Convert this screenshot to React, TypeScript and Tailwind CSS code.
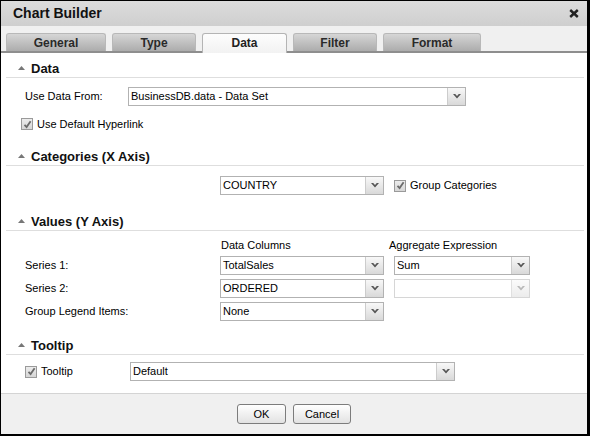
import React from "react";

const TABS = [
  { name: "General", w: "w-[100px]" },
  { name: "Type", w: "w-[84px]" },
  { name: "Data", w: "w-[85px]", active: true },
  { name: "Filter", w: "w-[84px]" },
  { name: "Format", w: "w-[98px]" },
];

function Chevron({ dim }: { dim?: boolean }) {
  return (
    <svg width="8" height="5" viewBox="0 0 8 5">
      <polygon points="0,0 2.2,0 4,2 5.8,0 8,0 4,4.5" fill={dim ? "#b8b8b8" : "#555"} />
    </svg>
  );
}

function Select({ value, w, disabled }: { value?: string; w: string; disabled?: boolean }) {
  return (
    <div className={`${w} flex h-[19px] border bg-white ${disabled ? "border-[#d6d6d6]" : "border-[#b2b2b2]"}`}>
      <div className="flex-1 pl-[2px] flex items-center text-[11px] text-black leading-none">{value}</div>
      <div
        className={`w-[18px] flex items-center justify-center border-l bg-linear-to-b ${
          disabled ? "border-[#e0e0e0] from-[#fbfbfb] to-[#ececec]" : "border-[#cccccc] from-[#f8f8f8] to-[#d9d9d9]"
        }`}
      >
        <Chevron dim={disabled} />
      </div>
    </div>
  );
}

function Check({ label }: { label: string }) {
  return (
    <div className="flex items-center gap-[4px]">
      <div className="w-[12px] h-[12px] border border-[#9a9a9a] bg-linear-to-b from-[#ececec] to-[#d6d6d6] flex items-center justify-center">
        <svg width="9" height="9" viewBox="0 0 9 9">
          <path d="M1.5 4.8 L3.6 7 L7.6 1.2" stroke="#6b6b6b" strokeWidth="1.8" fill="none" />
        </svg>
      </div>
      <span className="text-[11px] text-black leading-none">{label}</span>
    </div>
  );
}

function Header({ title }: { title: string }) {
  return (
    <div className="ml-[5px] mr-[3px] h-[19px] border-b border-[#dedede] flex items-center pl-[12px] gap-[6px]">
      <svg width="7" height="4" viewBox="0 0 7 4">
        <polygon points="0,4 3.5,0 7,4" fill="#777" />
      </svg>
      <span className="text-[13px] font-bold text-[#111] leading-none">{title}</span>
    </div>
  );
}

export default function App() {
  return (
    <div
      className="w-[590px] h-[436px] flex flex-col border-l border-t border-r-[3px] border-b-2 border-black bg-white overflow-hidden"
      style={{ fontFamily: '"Liberation Sans", Arial, sans-serif' }}
    >
      {/* title bar */}
      <div className="h-[25px] flex items-center justify-between pl-[12px] pr-[8px] bg-linear-to-b from-[#dcdcdc] to-[#cfcfcf]">
        <span className="text-[14px] font-bold text-[#111]">Chart Builder</span>
        <svg width="10" height="9" viewBox="0 0 10 9">
          <path d="M1.2 1 L8.8 8 M8.8 1 L1.2 8" stroke="#222" strokeWidth="2.4" />
        </svg>
      </div>

      {/* tabs */}
      <div className="h-[27px] pt-[7px] bg-[#f0f0f0] border-b-2 border-[#8e8e8e] flex items-end gap-[6px] pl-[5px]">
        {TABS.map((t) =>
          t.active ? (
            <div
              key={t.name}
              className={`${t.w} h-[20px] -mb-[2px] rounded-t-[3px] border border-b-0 border-[#b4b4b4] bg-linear-to-b from-[#fdfdfd] to-[#f2f2f2] flex items-center justify-center pb-[2px] text-[12px] font-bold text-[#222]`}
            >
              {t.name}
            </div>
          ) : (
            <div
              key={t.name}
              className={`${t.w} h-[18px] rounded-t-[3px] border border-b-0 border-[#b8b8b8] bg-linear-to-b from-[#d6d6d6] to-[#acacac] flex items-center justify-center text-[12px] font-bold text-[#2a2a2a]`}
            >
              {t.name}
            </div>
          )
        )}
      </div>

      {/* content */}
      <div className="flex-1">
        <div className="mt-[6px]">
          <Header title="Data" />
          <div className="pt-[9px] pl-[24px] flex items-center">
            <span className="w-[103px] text-[11px] text-black">Use Data From:</span>
            <Select value="BusinessDB.data - Data Set" w="w-[338px]" />
          </div>
          <div className="mt-[11px] h-[14px] pl-[20px] flex items-center">
            <Check label="Use Default Hyperlink" />
          </div>
        </div>

        <div className="mt-[16px]">
          <Header title="Categories (X Axis)" />
          <div className="pt-[10px] pl-[219px] flex items-center gap-[10px]">
            <Select value="COUNTRY" w="w-[164px]" />
            <Check label="Group Categories" />
          </div>
        </div>

        <div className="mt-[17px]">
          <Header title="Values (Y Axis)" />
          <div className="pt-[7px] pl-[24px] flex flex-col gap-[4px] text-[11px] text-black">
            <div className="h-[14px] flex items-center">
              <span className="w-[195px]" />
              <span className="w-[174px] pl-[1px]">Data Columns</span>
              <span className="-ml-[5px]">Aggregate Expression</span>
            </div>
            <div className="flex items-center">
              <span className="w-[195px]">Series 1:</span>
              <Select value="TotalSales" w="w-[164px]" />
              <span className="w-[10px]" />
              <Select value="Sum" w="w-[136px]" />
            </div>
            <div className="flex items-center">
              <span className="w-[195px]">Series 2:</span>
              <Select value="ORDERED" w="w-[164px]" />
              <span className="w-[10px]" />
              <Select w="w-[136px]" disabled />
            </div>
            <div className="flex items-center">
              <span className="w-[195px]">Group Legend Items:</span>
              <Select value="None" w="w-[164px]" />
            </div>
          </div>
        </div>

        <div className="mt-[15px]">
          <Header title="Tooltip" />
          <div className="pt-[7px] pl-[24px] flex items-center">
            <div className="w-[105px]">
              <Check label="Tooltip" />
            </div>
            <Select value="Default" w="w-[325px]" />
          </div>
        </div>
      </div>

      {/* footer */}
      <div className="h-[41px] border-t border-[#d4d4d4] bg-[#f0f0f0] flex items-center justify-center gap-[7px]">
        <button className="w-[49px] h-[20px] rounded-[3px] border border-[#7c7c7c] bg-linear-to-b from-[#ffffff] to-[#e2e2e2] text-[11px] text-black">
          OK
        </button>
        <button className="w-[58px] h-[20px] rounded-[3px] border border-[#7c7c7c] bg-linear-to-b from-[#ffffff] to-[#e2e2e2] text-[11px] text-black">
          Cancel
        </button>
      </div>
    </div>
  );
}
